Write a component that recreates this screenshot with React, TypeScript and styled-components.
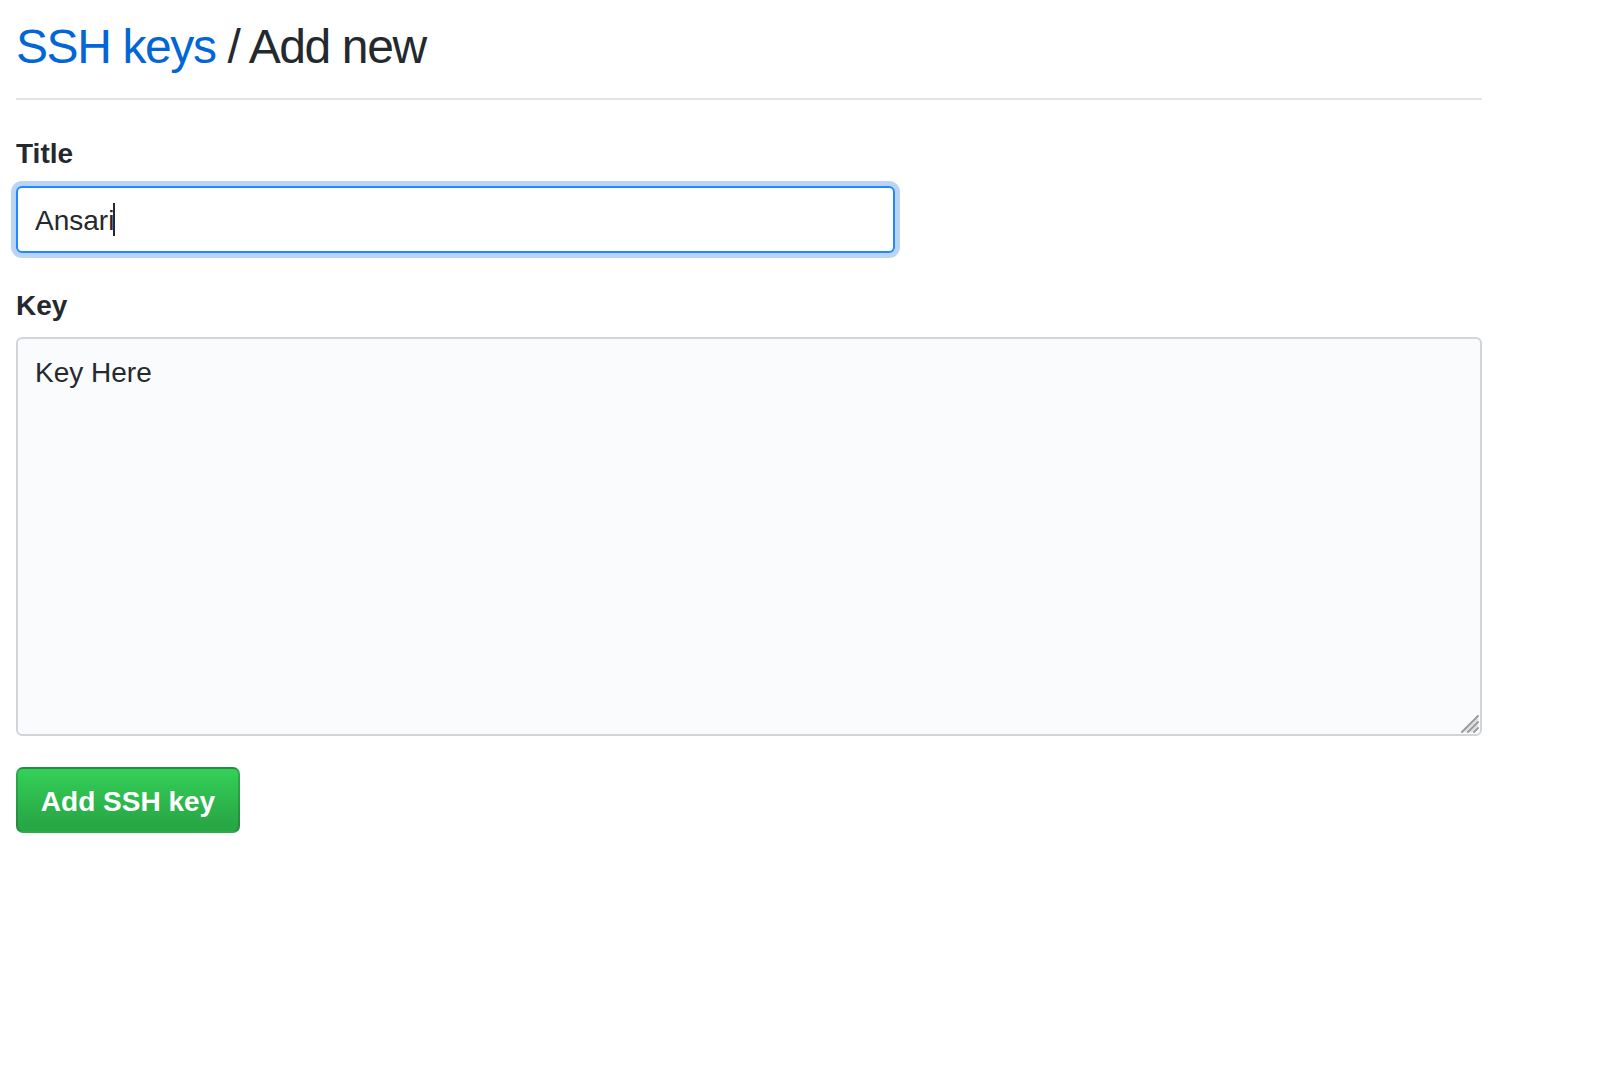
import React from 'react'
import styled, { createGlobalStyle } from 'styled-components'

const GlobalStyle = createGlobalStyle`
  body {
    margin: 0;
    background: #fff;
    font-family: "Liberation Sans", Arial, sans-serif;
    color: #24292e;
  }
`

const Page = styled.div`
  width: 1466px;
  padding: 0 16px;
`

const Subhead = styled.div`
  padding-top: 15px;
  padding-bottom: 19px;
  border-bottom: 2px solid #e1e4e8;
`

const Heading = styled.h2`
  margin: 0;
  font-size: 48px;
  font-weight: 400;
  line-height: 64px;
  letter-spacing: -1.4px;
`

const Crumb = styled.a`
  color: #0366d6;
  text-decoration: none;
`

const Form = styled.form`
  display: flex;
  flex-direction: column;
  align-items: flex-start;
`

const Group = styled.div<{ $top: number }>`
  display: flex;
  flex-direction: column;
  align-items: stretch;
  width: 100%;
  margin-top: ${p => p.$top}px;
`

const Label = styled.label<{ $gap: number }>`
  font-size: 28px;
  font-weight: 700;
  line-height: 42px;
  margin-bottom: ${p => p.$gap}px;
`

const Field = styled.div`
  position: relative;
  align-self: flex-start;
`

const TextInput = styled.input`
  display: block;
  box-sizing: border-box;
  width: 879px;
  height: 67px;
  padding: 2px 17px 0;
  font-family: inherit;
  font-size: 28px;
  color: #24292e;
  background: #fff;
  border: 2px solid #2188ff;
  border-radius: 6px;
  box-shadow: 0 0 0 5px rgba(3, 102, 214, 0.28);
  outline: none;
  caret-color: transparent;
`

const Caret = styled.span`
  position: absolute;
  left: 97px;
  top: 17px;
  width: 2px;
  height: 33px;
  background: #24292e;
`

const AreaWrap = styled.div`
  position: relative;
  width: 100%;
`

const KeyArea = styled.textarea`
  display: block;
  box-sizing: border-box;
  width: 100%;
  height: 399px;
  padding: 13px 17px;
  font-family: inherit;
  font-size: 28px;
  line-height: 42px;
  color: #24292e;
  background: #fafbfc;
  border: 2px solid #d1d5da;
  border-radius: 6px;
  outline: none;
  resize: none;
`

const Grip = styled.svg`
  position: absolute;
  right: 3px;
  bottom: 3px;
  pointer-events: none;
`

const SubmitButton = styled.button`
  margin-top: 31px;
  height: 66px;
  width: 224px;
  padding: 3px 0 0;
  font-family: inherit;
  font-size: 28px;
  font-weight: 700;
  color: #fff;
  background-image: linear-gradient(-180deg, #34d058 0%, #28a745 90%);
  border: 2px solid rgba(27, 31, 35, 0.2);
  border-radius: 7px;
  cursor: pointer;
`

const App: React.FC = () => {
  return (
    <>
      <GlobalStyle />
      <Page>
        <Subhead>
          <Heading>
            <Crumb href="#">SSH keys</Crumb> / Add new
          </Heading>
        </Subhead>
        <Form onSubmit={e => e.preventDefault()}>
          <Group $top={33}>
            <Label htmlFor="key-title" $gap={11}>Title</Label>
            <Field>
              <TextInput id="key-title" type="text" defaultValue="Ansari" />
              <Caret />
            </Field>
          </Group>
          <Group $top={32}>
            <Label htmlFor="key-body" $gap={10}>Key</Label>
            <AreaWrap>
              <KeyArea id="key-body" defaultValue="Key Here" />
              <Grip width="20" height="20" viewBox="0 0 20 20">
                <path d="M19 3L3 19M19 9L9 19M19 15L15 19" stroke="#9a9a9a" strokeWidth="2" strokeLinecap="round" />
                <path d="M19 6L6 19M19 12L12 19" stroke="#d8d8d8" strokeWidth="1.5" />
              </Grip>
            </AreaWrap>
          </Group>
          <SubmitButton type="submit">Add SSH key</SubmitButton>
        </Form>
      </Page>
    </>
  )
}

export default App
